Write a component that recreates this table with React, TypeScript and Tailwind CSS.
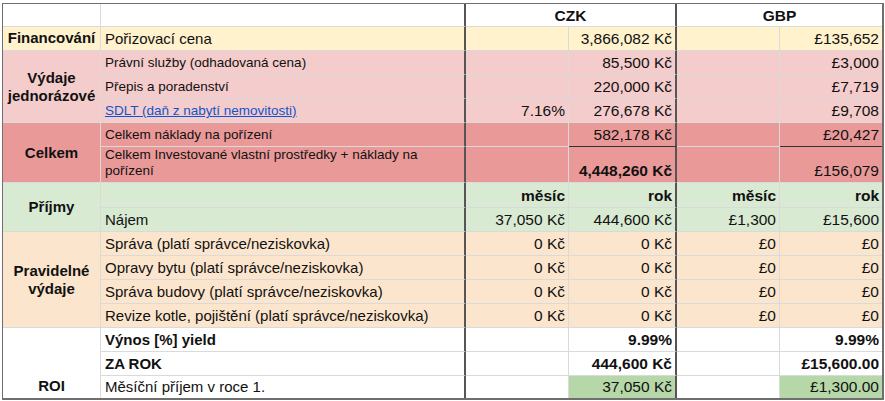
import React from "react"

const Y = "bg-[#fff2cc]"
const P = "bg-[#f4cccc]"
const R = "bg-[#ea9999]"
const G = "bg-[#d9ead3]"
const O = "bg-[#fce5cd]"
const W = "bg-white"
const G2 = "bg-[#b6d7a8]"

type Side = "n" | "t" | "d" | "x"

function Cell({
  children,
  bg = W,
  r = "n",
  b = "n",
  align = "l",
  mid = false,
  className = "",
}: {
  children?: React.ReactNode
  bg?: string
  r?: Side
  b?: Side
  align?: "l" | "r" | "c"
  mid?: boolean
  className?: string
}) {
  const right = r === "t" ? "border-r-2 border-r-[#555555]" : r === "x" ? "" : "border-r border-r-[#dadada]"
  const bottom = b === "d" ? "border-b border-b-[#333333]" : b === "x" ? "" : "border-b border-b-[#dadada]"
  const al = align === "r" ? "justify-end text-right pl-[4px] pr-[3px]" : align === "c" ? "justify-center text-center px-[4px]" : "justify-start text-left px-[4px]"
  const va = mid ? "items-center" : "items-end pb-[3px]"
  return <div className={`flex min-w-0 ${bg} ${right} ${bottom} ${al} ${va} ${className}`}>{children}</div>
}

function Line({
  bg,
  label,
  c,
  d,
  e,
  f,
  labelCls = "text-[15px]",
  valCls = "",
  dBg,
  fBg,
  under = false,
  last = false,
}: {
  bg: string
  label?: React.ReactNode
  c?: React.ReactNode
  d?: React.ReactNode
  e?: React.ReactNode
  f?: React.ReactNode
  labelCls?: string
  valCls?: string
  dBg?: string
  fBg?: string
  under?: boolean
  last?: boolean
}) {
  const b: Side = last ? "x" : "n"
  const v = `text-[15.5px] ${valCls}`
  return (
    <>
      <Cell bg={bg} r="t" b={b} className={labelCls}>{label}</Cell>
      <Cell bg={bg} b={b} align="r" className={v}>{c}</Cell>
      <Cell bg={dBg ?? bg} r="t" b={under ? "d" : b} align="r" className={v}>{d}</Cell>
      <Cell bg={bg} b={b} align="r" className={v}>{e}</Cell>
      <Cell bg={fBg ?? bg} r="x" b={under ? "d" : b} align="r" className={v}>{f}</Cell>
    </>
  )
}

const small = "text-[13.5px] leading-[16px]"
const head = "font-bold text-[15px] leading-[18px] !px-[2px]"

export default function App() {
  return (
    <div className="w-[885px] h-[401px] bg-white text-[#111] font-['Liberation_Sans',Arial,sans-serif] text-[15px] leading-[17px] overflow-hidden">
      <div className="ml-[2px] mt-[3px] w-fit border-l border-t border-r-2 border-b-2 border-[#6f6f6f]">
        <div className="grid grid-cols-[98px_365px_103px_108px_103px_102px] grid-rows-[23px_24px_24px_24px_24px_24px_36px_25px_24px_24px_24px_24px_24px_24px_24px_22px]">
          {/* header */}
          <Cell />
          <Cell r="t" />
          <Cell r="t" align="c" mid className="col-span-2 font-bold text-[15.5px]">CZK</Cell>
          <Cell r="x" align="c" mid className="col-span-2 font-bold text-[15.5px]">GBP</Cell>

          {/* financování */}
          <Cell bg={Y} align="c" className={head}>Financování</Cell>
          <Line bg={Y} label="Pořizovací cena" d="3,866,082 Kč" f="£135,652" />

          {/* výdaje jednorázové */}
          <Cell bg={P} align="c" mid className={`row-span-3 ${head}`}>Výdaje jednorázové</Cell>
          <Line bg={P} labelCls={small} label="Právní služby (odhadovaná cena)" d="85,500 Kč" f="£3,000" />
          <Line bg={P} labelCls={small} label="Přepis a poradenství" d="220,000 Kč" f="£7,719" />
          <Line
            bg={P}
            labelCls={small}
            label={<a className="text-[#1155cc] underline">SDLT (daň z nabytí nemovitosti)</a>}
            c="7.16%"
            d="276,678 Kč"
            f="£9,708"
          />

          {/* celkem */}
          <Cell bg={R} align="c" mid className={`row-span-2 ${head}`}>Celkem</Cell>
          <Line bg={R} labelCls={small} label="Celkem náklady na pořízení" d="582,178 Kč" f="£20,427" under />
          <Cell bg={R} r="t" className={small}>Celkem Investované vlastní prostředky + náklady na pořízení</Cell>
          <Cell bg={R} align="r" />
          <Cell bg={R} r="t" align="r" className="font-bold text-[15.5px]">4,448,260 Kč</Cell>
          <Cell bg={R} align="r" />
          <Cell bg={R} r="x" align="r" className="text-[15.5px]">£156,079</Cell>

          {/* příjmy */}
          <Cell bg={G} align="c" mid className={`row-span-2 ${head}`}>Příjmy</Cell>
          <Line bg={G} valCls="font-bold" c="měsíc" d="rok" e="měsíc" f="rok" />
          <Line bg={G} label="Nájem" c="37,050 Kč" d="444,600 Kč" e="£1,300" f="£15,600" />

          {/* pravidelné výdaje */}
          <Cell bg={O} align="c" mid className={`row-span-4 ${head}`}>Pravidelné výdaje</Cell>
          <Line bg={O} label="Správa (platí správce/neziskovka)" c="0 Kč" d="0 Kč" e="£0" f="£0" />
          <Line bg={O} label="Opravy bytu (platí správce/neziskovka)" c="0 Kč" d="0 Kč" e="£0" f="£0" />
          <Line bg={O} label="Správa budovy (platí správce/neziskovka)" c="0 Kč" d="0 Kč" e="£0" f="£0" />
          <Line bg={O} label="Revize kotle, pojištění (platí správce/neziskovka)" c="0 Kč" d="0 Kč" e="£0" f="£0" />

          {/* ROI */}
          <Cell bg={W} b="x" align="c" className={`row-span-3 ${head}`}>ROI</Cell>
          <Line bg={W} labelCls="font-bold" label="Výnos [%] yield" valCls="font-bold" d="9.99%" f="9.99%" />
          <Line bg={W} labelCls="font-bold" label="ZA ROK" valCls="font-bold" d="444,600 Kč" f="£15,600.00" />
          <Line bg={W} label="Měsíční příjem v roce 1." d="37,050 Kč" f="£1,300.00" dBg={G2} fBg={G2} last />
        </div>
      </div>
    </div>
  )
}
